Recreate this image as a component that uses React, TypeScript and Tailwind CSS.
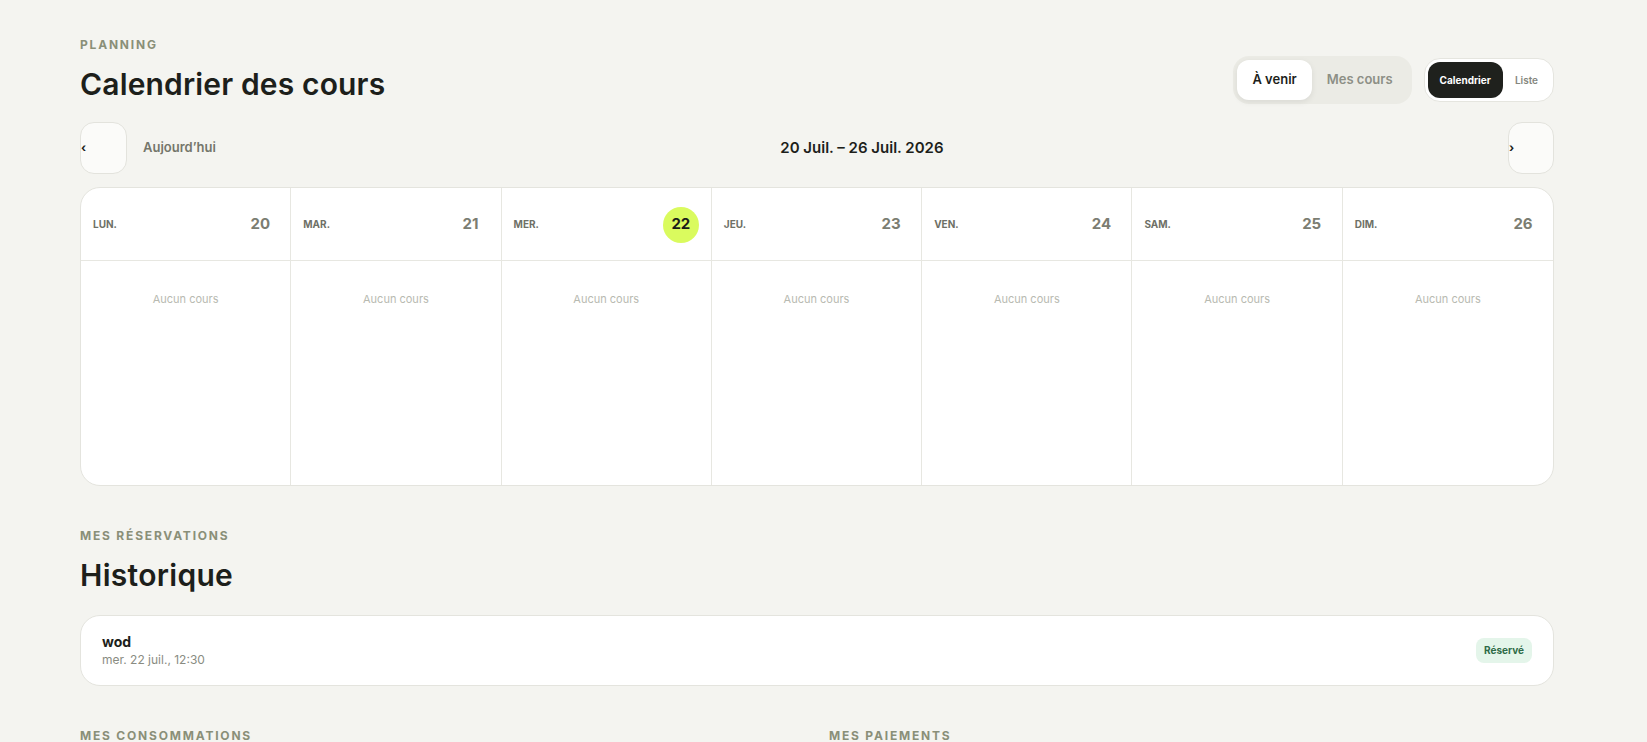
import { useState } from "react";

type Day = { label: string; date: number; today?: boolean };

const week: Day[] = [
  { label: "Lun.", date: 20 },
  { label: "Mar.", date: 21 },
  { label: "Mer.", date: 22, today: true },
  { label: "Jeu.", date: 23 },
  { label: "Ven.", date: 24 },
  { label: "Sam.", date: 25 },
  { label: "Dim.", date: 26 },
];

function Eyebrow({ children }: { children: React.ReactNode }) {
  return (
    <p className="text-[12px] leading-4 font-bold uppercase tracking-[0.15em] text-[#8a8f78]">
      {children}
    </p>
  );
}

function DayColumn({ day, last }: { day: Day; last: boolean }) {
  return (
    <div className={last ? "flex flex-col" : "flex flex-col border-r border-[#e7e7e1]"}>
      <div className="h-[73px] pt-px flex items-center justify-between px-3 border-b border-[#e7e7e1]">
        <span className="text-[10px] font-bold uppercase text-[#6e7066]">{day.label}</span>
        <span
          className={
            day.today
              ? "w-9 h-9 rounded-full flex items-center justify-center text-[15px] font-bold bg-[#dafb5e] text-[#1b1d18]"
              : "w-9 h-9 rounded-full flex items-center justify-center text-[15px] font-bold text-[#7b7d72]"
          }
        >
          {day.date}
        </span>
      </div>
      <div className="h-[224px] pt-[31px] text-center text-[11px] leading-[14px] text-[#b8bab1]">
        Aucun cours
      </div>
    </div>
  );
}

export default function App() {
  const [scope, setScope] = useState<"upcoming" | "mine">("upcoming");
  const [view, setView] = useState<"calendar" | "list">("calendar");

  const scopeBtn = (active: boolean) =>
    active
      ? "h-10 px-[15px] rounded-xl bg-white text-[13px] font-semibold text-[#1d1f1b] shadow-[0_2px_6px_rgba(0,0,0,0.08)]"
      : "h-10 px-[15px] rounded-xl text-[13px] font-semibold text-[#8d8f86]";
  const viewBtn = (active: boolean) =>
    active
      ? "h-9 px-3 rounded-xl bg-[#1f211d] text-white text-[10px] font-bold"
      : "h-9 px-3 rounded-xl text-[#85877e] text-[10px] font-semibold";

  return (
    <div
      className="min-h-screen bg-[#f4f4f0] px-20 pt-[37px] pb-20 text-[#1d1f1b]"
      style={{ fontFamily: "Inter, 'Noto Sans', sans-serif" }}
    >
      <div className="max-w-[1474px]">
        {/* Header */}
        <div className="flex items-end justify-between">
          <div>
            <Eyebrow>Planning</Eyebrow>
            <h1 className="mt-[13px] text-[30px] leading-9 font-semibold tracking-[0.005em]">
              Calendrier des cours
            </h1>
          </div>
          <div className="flex items-center gap-3 -mb-[2px]">
            <div className="flex p-1 rounded-2xl bg-[#ebebe5]">
              <button onClick={() => setScope("upcoming")} className={scopeBtn(scope === "upcoming")}>
                À venir
              </button>
              <button onClick={() => setScope("mine")} className={scopeBtn(scope === "mine")}>
                Mes cours
              </button>
            </div>
            <div className="flex p-[3px] rounded-2xl bg-white border border-[#e5e5df]">
              <button onClick={() => setView("calendar")} className={viewBtn(view === "calendar")}>
                Calendrier
              </button>
              <button onClick={() => setView("list")} className={viewBtn(view === "list")}>
                Liste
              </button>
            </div>
          </div>
        </div>

        {/* Week navigation */}
        <div className="mt-5 flex items-center h-[52px]">
          <button className="w-[47px] h-[52px] rounded-[14px] border border-[#e3e3dd] bg-[#fbfbf9] flex items-center text-[12px] font-bold leading-none text-[#1d1f1b]">
            ‹
          </button>
          <button className="ml-4 text-[13px] font-semibold text-[#74766b]">Aujourd’hui</button>
          <p className="flex-1 text-center text-[15px] font-semibold">20 Juil. – 26 Juil. 2026</p>
          <button className="w-[46px] h-[52px] rounded-[14px] border border-[#e3e3dd] bg-[#fbfbf9] flex items-center text-[12px] font-bold leading-none text-[#1d1f1b]">
            ›
          </button>
        </div>

        {/* Calendar */}
        <div className="mt-[13px] grid grid-cols-7 rounded-[20px] border border-[#e4e4de] bg-white overflow-hidden">
          {week.map((d, i) => (
            <DayColumn key={d.date} day={d} last={i === week.length - 1} />
          ))}
        </div>

        {/* History */}
        <div className="mt-[42px]">
          <Eyebrow>Mes réservations</Eyebrow>
          <h2 className="mt-[13px] text-[30px] leading-9 font-semibold tracking-[0.01em]">Historique</h2>
          <div className="mt-[22px] h-[71px] rounded-[20px] border border-[#e4e4de] bg-white px-[21px] flex items-center justify-between">
            <div className="flex flex-col gap-px">
              <span className="text-[14px] leading-[18px] font-bold">wod</span>
              <span className="text-[12px] leading-4 text-[#8a8c82]">mer. 22 juil., 12:30</span>
            </div>
            <span className="h-[25px] px-2 rounded-lg bg-[#e4f5ea] text-[#2e6b47] text-[10px] font-bold flex items-center">
              Réservé
            </span>
          </div>
        </div>

        <div className="mt-[42px] grid grid-cols-2 gap-6">
          <div>
            <Eyebrow>Mes consommations</Eyebrow>
          </div>
          <div>
            <Eyebrow>Mes paiements</Eyebrow>
          </div>
        </div>
      </div>
    </div>
  );
}
